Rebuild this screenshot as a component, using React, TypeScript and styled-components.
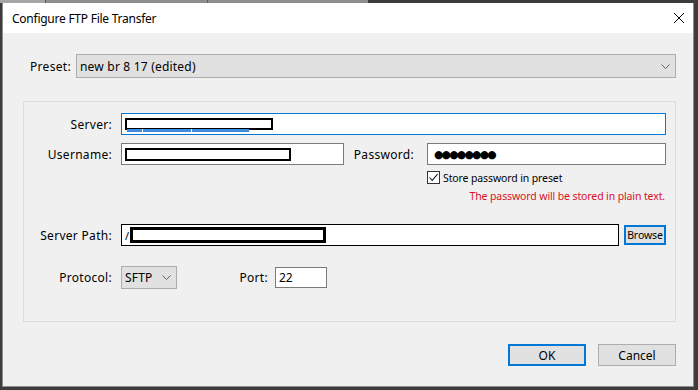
import React from "react";
import styled, { createGlobalStyle } from "styled-components";

const GlobalStyle = createGlobalStyle`
  html, body {
    margin: 0;
    padding: 0;
    background: #3c3c3c;
  }
  body {
    font-family: "Noto Sans", "Open Sans", sans-serif;
    font-size: 12px;
    color: #000;
  }
`;

const Desktop = styled.div`
  width: 698px;
  height: 390px;
  box-sizing: border-box;
  padding: 3px 4px 3px 2px;
  display: flex;
  background-color: #3c3c3c;
  background-image: linear-gradient(
    to right,
    #a6a6a6 0 45px,
    #5e5e5e 45px 46px,
    #8e8e8e 46px 207px,
    #5e5e5e 207px 208px,
    #8e8e8e 208px 368px,
    #3c3c3c 368px
  );
  background-size: 100% 3px;
  background-repeat: no-repeat;
`;

const Window = styled.div`
  flex: 1;
  display: flex;
  flex-direction: column;
  border: 1px solid #8d8d8d;
  border-top: none;
  background: #f0f0f0;
`;

const TitleBar = styled.div`
  height: 30px;
  flex: none;
  background: #fff;
  display: flex;
  align-items: center;
  justify-content: space-between;
  padding: 0 8px 0 9px;
`;

const Title = styled.span`
  font-size: 12px;
  letter-spacing: -0.25px;
`;

const Body = styled.div`
  flex: 1;
  display: flex;
  flex-direction: column;
  padding: 21px 17px 20px 20px;
`;

const PresetRow = styled.div`
  display: flex;
  align-items: center;
  height: 24px;
  margin-left: 7px;
`;

const ComboBox = styled.div<{ $width?: number }>`
  box-sizing: border-box;
  height: ${(p) => (p.$width ? 23 : 24)}px;
  ${(p) => (p.$width ? `width: ${p.$width}px;` : "flex: 1;")}
  background: #e1e1e1;
  border: 1px solid #adadad;
  display: flex;
  align-items: center;
  justify-content: space-between;
  padding: 0 5px 0 3px;
  letter-spacing: 0.2px;
  white-space: nowrap;
`;

const GroupBox = styled.div`
  margin-top: 23px;
  border: 1px solid #dcdcdc;
  padding: 11px 9px 32px 0;
  display: flex;
  flex-direction: column;
`;

const FieldRow = styled.div<{ $top: number; $height?: number }>`
  display: flex;
  align-items: center;
  margin-top: ${(p) => p.$top}px;
  height: ${(p) => p.$height ?? 22}px;
`;

const FieldLabel = styled.label<{ $width?: number; $gap?: number; $align?: string }>`
  flex: none;
  width: ${(p) => p.$width ?? 88}px;
  margin-right: ${(p) => p.$gap ?? 9}px;
  text-align: ${(p) => p.$align ?? "right"};
  letter-spacing: 0.3px;
  white-space: nowrap;
`;

const TextBox = styled.div<{ $width?: number; $border?: string; $height?: number }>`
  box-sizing: border-box;
  position: relative;
  height: ${(p) => p.$height ?? 22}px;
  ${(p) => (p.$width ? `width: ${p.$width}px; flex: none;` : "flex: 1;")}
  background: #fff;
  border: 1px solid ${(p) => p.$border ?? "#7a7a7a"};
  display: flex;
  align-items: center;
  padding-left: 3px;
  white-space: nowrap;
`;

const Redaction = styled.span<{ $width: number; $height: number; $stroke?: number }>`
  position: relative;
  display: inline-block;
  box-sizing: border-box;
  width: ${(p) => p.$width}px;
  height: ${(p) => p.$height}px;
  border: ${(p) => p.$stroke ?? 2}px solid #000;
  background: #fff;
`;

const Selection = styled.span`
  position: absolute;
  left: 0;
  bottom: -4px;
  width: 122px;
  height: 3px;
  background: linear-gradient(
    to right,
    #3d8ee0 0 15px,
    #fff 15px 16px,
    #3d8ee0 16px 64px,
    #fff 64px 65px,
    #3d8ee0 65px
  );
`;

const Slash = styled.span`
  margin-right: 1px;
  font-size: 11px;
`;

const Dots = styled.span`
  font-family: "DejaVu Sans", sans-serif;
  font-size: 10.8px;
  letter-spacing: -1.8px;
  padding-left: 3px;
`;

const CheckRow = styled.label`
  display: flex;
  align-items: center;
  gap: 3px;
  margin-top: 6px;
  margin-left: 403px;
  height: 13px;
  font-size: 10.5px;
  letter-spacing: -0.12px;
`;

const CheckBox = styled.span`
  box-sizing: border-box;
  width: 13px;
  height: 13px;
  border: 1px solid #333;
  background: #fff;
  display: flex;
  align-items: center;
  justify-content: center;
`;

const Note = styled.div`
  margin-top: 5px;
  height: 15px;
  line-height: 15px;
  text-align: right;
  padding-right: 1px;
  font-size: 10.5px;
  letter-spacing: -0.12px;
  color: #d9101e;
`;

const Button = styled.button<{ $primary?: boolean; $width?: number; $height?: number; $small?: boolean }>`
  box-sizing: border-box;
  width: ${(p) => p.$width ?? 78}px;
  height: ${(p) => p.$height ?? 22}px;
  flex: none;
  background: #e1e1e1;
  border: ${(p) => (p.$primary ? "2px solid #0078d7" : "1px solid #adadad")};
  font-family: inherit;
  font-size: ${(p) => (p.$small ? "10.5px" : "12px")};
  letter-spacing: ${(p) => (p.$small ? "-0.1px" : "0")};
  color: #000;
  padding: 0;
  display: flex;
  align-items: center;
  justify-content: center;
`;

const BrowseButton = styled(Button)`
  margin-left: 5px;
`;

const ButtonBar = styled.div`
  margin-top: 22px;
  display: flex;
  justify-content: flex-end;
  gap: 12px;
`;

const Chevron = () => (
  <svg width="9" height="5" viewBox="0 0 9 5" fill="none">
    <path d="M0.5 0.5 L4.5 4.5 L8.5 0.5" stroke="#606060" strokeWidth="1" />
  </svg>
);

const CloseIcon = () => (
  <svg width="12" height="12" viewBox="0 0 12 12" fill="none">
    <path d="M1 1 L11 11 M11 1 L1 11" stroke="#000" strokeWidth="1" />
  </svg>
);

const Tick = () => (
  <svg width="11" height="11" viewBox="0 0 11 11" fill="none">
    <path d="M1.5 5.5 L4.2 8.4 L9.6 2.2" stroke="#222" strokeWidth="1.1" />
  </svg>
);

export default function App() {
  return (
    <>
      <GlobalStyle />
      <Desktop>
        <Window>
          <TitleBar>
            <Title>Configure FTP File Transfer</Title>
            <CloseIcon />
          </TitleBar>
          <Body>
            <PresetRow>
              <FieldLabel $width={39} $gap={7} $align="left">
                Preset:
              </FieldLabel>
              <ComboBox>
                <span>new br 8 17 (edited)</span>
                <Chevron />
              </ComboBox>
            </PresetRow>

            <GroupBox>
              <FieldRow $top={0}>
                <FieldLabel>Server:</FieldLabel>
                <TextBox $border="#0078d7">
                  <Redaction $width={148} $height={12}>
                    <Selection />
                  </Redaction>
                </TextBox>
              </FieldRow>

              <FieldRow $top={8}>
                <FieldLabel>Username:</FieldLabel>
                <TextBox $width={223}>
                  <Redaction $width={166} $height={13} />
                </TextBox>
                <FieldLabel $width={70} $gap={13}>
                  Password:
                </FieldLabel>
                <TextBox>
                  <Dots>●●●●●●●●</Dots>
                </TextBox>
              </FieldRow>

              <CheckRow>
                <CheckBox>
                  <Tick />
                </CheckBox>
                <span>Store password in preset</span>
              </CheckRow>

              <Note>The password will be stored in plain text.</Note>

              <FieldRow $top={20}>
                <FieldLabel>Server Path:</FieldLabel>
                <TextBox $border="#000">
                  <Slash>/</Slash>
                  <Redaction $width={196} $height={16} $stroke={3} />
                </TextBox>
                <BrowseButton $primary $small $width={42} $height={20}>
                  Browse
                </BrowseButton>
              </FieldRow>

              <FieldRow $top={20} $height={23}>
                <FieldLabel>Protocol:</FieldLabel>
                <ComboBox $width={56}>
                  <span>SFTP</span>
                  <Chevron />
                </ComboBox>
                <FieldLabel $width={91} $gap={7}>
                  Port:
                </FieldLabel>
                <TextBox $width={52} $height={21}>
                  22
                </TextBox>
              </FieldRow>
            </GroupBox>

            <ButtonBar>
              <Button $primary>OK</Button>
              <Button>Cancel</Button>
            </ButtonBar>
          </Body>
        </Window>
      </Desktop>
    </>
  );
}
